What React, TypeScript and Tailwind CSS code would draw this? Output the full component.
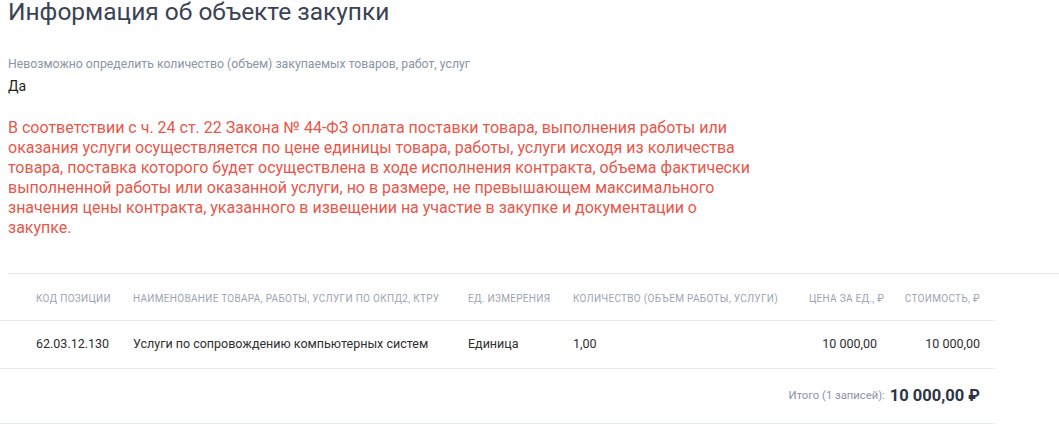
const cols = "grid grid-cols-[121px_335px_105px_236px_92px_106px]";

const headers = [
  { label: "Код позиции", align: "text-left", pad: "pl-9 pr-3" },
  { label: "Наименование товара, работы, услуги по ОКПД2, КТРУ", align: "text-left", pad: "px-3" },
  { label: "Ед. измерения", align: "text-left", pad: "px-3" },
  { label: "Количество (объем работы, услуги)", align: "text-left", pad: "px-3" },
  { label: "Цена за ед., ₽", align: "text-right", pad: "px-3" },
  { label: "Стоимость, ₽", align: "text-right", pad: "pl-3 pr-[15px]" },
];

const row = ["62.03.12.130", "Услуги по сопровождению компьютерных систем", "Единица", "1,00", "10 000,00", "10 000,00"];

export default function App() {
  return (
    <main className="min-h-screen bg-white pl-2 pt-px font-['Roboto',sans-serif] overflow-hidden">
      <h1 className="-mt-[3px] text-[24.5px] leading-7 font-normal text-[#3b4256]">Информация об объекте закупки</h1>

      <div className="mt-[30px] text-[12.25px] leading-4 text-[#8b93a7]">
        Невозможно определить количество (объем) закупаемых товаров, работ, услуг
      </div>
      <div className="mt-1 text-[14px] leading-5 text-[#222]">Да</div>

      <p className="mt-[22px] w-[746px] text-[16px] leading-5 text-[#e8574a]">
        В соответствии с ч. 24 ст. 22 Закона № 44-ФЗ оплата поставки товара, выполнения работы или оказания услуги
        осуществляется по цене единицы товара, работы, услуги исходя из количества товара, поставка которого будет
        осуществлена в ходе исполнения контракта, объема фактически выполненной работы или оказанной услуги, но в
        размере, не превышающем максимального значения цены контракта, указанного в извещении на участие в закупке и
        документации о закупке.
      </p>

      <div className="mt-[35px] border-t border-[#e6e8ee]">
        <div className="-ml-2 w-[995px]">
          {/* header */}
          <div className={`${cols} h-[47px] items-center border-b border-[#e6e8ee] pt-[2px]`}>
            {headers.map((h) => (
              <div
                key={h.label}
                className={`${h.align} ${h.pad} whitespace-nowrap text-[10px] uppercase tracking-[0.03em] text-[#9ca3b4]`}
              >
                {h.label}
              </div>
            ))}
          </div>

          {/* row */}
          <div className={`${cols} h-[48px] items-center border-b border-[#e6e8ee]`}>
            {row.map((v, i) => (
              <div
                key={i}
                className={`${headers[i].align} ${headers[i].pad} whitespace-nowrap text-[12.5px] text-[#2e2e2e]`}
              >
                {v}
              </div>
            ))}
          </div>

          {/* total */}
          <div className="flex h-[55px] items-center justify-end gap-[5px] border-b border-[#e6e8ee] pr-[15px]">
            <span className="text-[11.25px] text-[#8b93a7]">Итого (1 записей):</span>
            <span className="text-[16.5px] font-bold text-[#2d3446]">10 000,00 ₽</span>
          </div>
        </div>
      </div>
    </main>
  );
}
